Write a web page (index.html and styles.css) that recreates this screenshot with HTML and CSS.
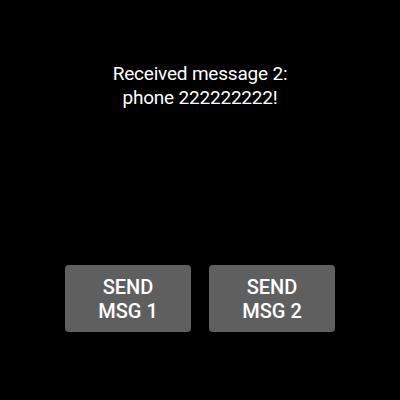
FILE: index.html
```html
<!DOCTYPE html>
<html>
<head>
<meta charset="utf-8">
<link rel="stylesheet" href="styles.css">
</head>
<body>
<div class="screen">
  <div class="message">Received message 2:<br>phone 222222222!</div>
  <div class="buttons">
    <button class="btn">SEND<br>MSG 1</button>
    <button class="btn">SEND<br>MSG 2</button>
  </div>
</div>
</body>
</html>
```
FILE: styles.css
```css
html, body {
  margin: 0;
  padding: 0;
  background: #000;
}
.screen {
  width: 400px;
  height: 400px;
  display: flex;
  flex-direction: column;
  align-items: center;
  font-family: Roboto, sans-serif;
  color: #fff;
}
.message {
  margin-top: 62px;
  font-size: 19px;
  line-height: 24px;
  letter-spacing: -0.2px;
  text-align: center;
}
.buttons {
  margin-top: 155px;
  display: flex;
  gap: 18px;
}
.btn {
  width: 126px;
  height: 67px;
  border: none;
  border-radius: 4px;
  background: #5f5f5f;
  color: #fff;
  font-family: Roboto, sans-serif;
  font-weight: 500;
  font-size: 20px;
  line-height: 24px;
  padding: 0;
}
```
